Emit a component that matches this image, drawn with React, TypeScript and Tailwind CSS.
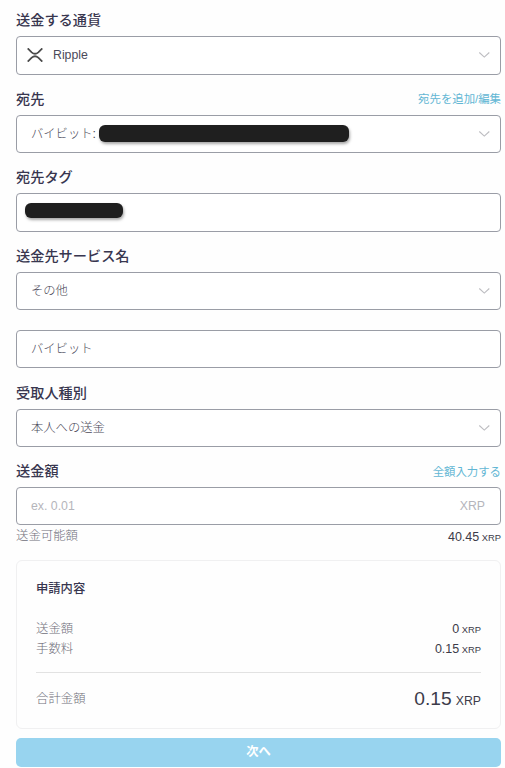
import type { ReactNode } from "react"

interface LabelProps {
  text: string
  action?: string
}

function FieldLabel({ text, action }: LabelProps) {
  return (
    <div className="flex h-[40.1px] items-center justify-between pt-[8.5px]">
      <span className="text-[14.2px] leading-5 font-medium text-[#38364f]">{text}</span>
      {action && <a className="pt-px text-[11.4px] leading-5 text-[#62b6d4]">{action}</a>}
    </div>
  )
}

function ChevronDown() {
  return (
    <svg width="12" height="8" viewBox="0 0 12 8" fill="none" stroke="#bdbdc1" strokeWidth="1.1">
      <path d="M1.3 1.5 6.3 6.1 11.3 1.5" />
    </svg>
  )
}

function RippleIcon() {
  return (
    <svg width="16" height="14" viewBox="0 0 16 14" fill="none" stroke="#4a4a4a" strokeWidth="1.8">
      <path d="M.7.4 4.7 4.3Q8 7.3 11.3 4.3L15.3.4" />
      <path d="M.7 13.6 4.7 9.7Q8 6.7 11.3 9.7L15.3 13.6" />
    </svg>
  )
}

interface BoxProps {
  children?: ReactNode
  select?: boolean
}

function FieldBox({ children, select }: BoxProps) {
  return (
    <div className="flex h-[38.4px] items-center justify-between rounded-[4px] border border-[#9a9da6] bg-white pr-[10px] pl-[14px] text-[12.3px] leading-5 text-[#4b4a59]">
      <div className="flex items-center">{children}</div>
      {select && <ChevronDown />}
    </div>
  )
}

interface AmountProps {
  label: string
  value: string
}

function AmountRow({ label, value }: AmountProps) {
  return (
    <div className="flex h-5 items-center justify-between">
      <span className="text-[12.4px] text-[#6f6e7a]">{label}</span>
      <span className="pt-px text-[12.5px] text-[#3c3b49]">
        {value} <span className="-ml-px text-[9.4px]">XRP</span>
      </span>
    </div>
  )
}

export default function App() {
  return (
    <div className="h-[768px] w-[505px] overflow-hidden bg-[#fefefe] pr-1 pl-4 font-['Liberation_Sans','Noto_Sans_CJK_JP',sans-serif]">
      {/* Currency */}
      <div className="-mt-[3.9px]">
        <FieldLabel text="送金する通貨" />
        <FieldBox select>
          <span className="-ml-1">
            <RippleIcon />
          </span>
          <span className="ml-[10px]">Ripple</span>
        </FieldBox>
      </div>

      {/* Destination */}
      <FieldLabel text="宛先" action="宛先を追加/編集" />
      <FieldBox select>
        <span className="font-light">バイビット:</span>
        <span className="ml-[3px] h-[17px] w-[250px] rounded-[6px] bg-[#1f1f1f] shadow-[1px_2px_3px_rgba(0,0,0,0.35)]" />
      </FieldBox>

      {/* Destination tag */}
      <FieldLabel text="宛先タグ" />
      <FieldBox>
        <span className="mb-1 -ml-[6px] h-[15px] w-[98px] rounded-[6px] bg-[#1f1f1f] shadow-[1px_2px_3px_rgba(0,0,0,0.35)]" />
      </FieldBox>

      {/* Service name */}
      <FieldLabel text="送金先サービス名" />
      <FieldBox select>
        <span className="font-light">その他</span>
      </FieldBox>
      <div className="mt-5">
        <FieldBox>
          <span className="font-light">バイビット</span>
        </FieldBox>
      </div>

      {/* Recipient type */}
      <FieldLabel text="受取人種別" />
      <FieldBox select>
        <span className="font-light">本人への送金</span>
      </FieldBox>

      {/* Amount */}
      <FieldLabel text="送金額" action="全額入力する" />
      <FieldBox>
        <span className="text-[#b5b5bb]">ex. 0.01</span>
        <span className="ml-[385px] text-[#b5b5bb]">XRP</span>
      </FieldBox>
      <div className="mt-px font-light">
        <AmountRow label="送金可能額" value="40.45" />
      </div>

      {/* Summary */}
      <div className="mt-[13.5px] h-[169px] rounded-[6px] border border-[#f0f0f1] px-[19px] pt-[18px]">
        <div className="text-[12.3px] leading-5 font-medium text-[#38364f]">申請内容</div>
        <div className="mt-5 border-b border-[#e2e2e2] pb-[13px] font-light">
          <AmountRow label="送金額" value="0" />
          <AmountRow label="手数料" value="0.15" />
        </div>
        <div className="mt-[10px] flex h-8 items-center justify-between">
          <span className="text-[12.4px] font-light text-[#6f6e7a]">合計金額</span>
          <span className="text-[19.2px] text-[#3c3b49]">
            0.15<span className="ml-1 text-[12.3px]">XRP</span>
          </span>
        </div>
      </div>

      <button className="mt-[9px] flex h-[29px] w-full items-center justify-center rounded-[5px] bg-[#98d4ef] text-[12.3px] font-bold text-white">
        次へ
      </button>
    </div>
  )
}
